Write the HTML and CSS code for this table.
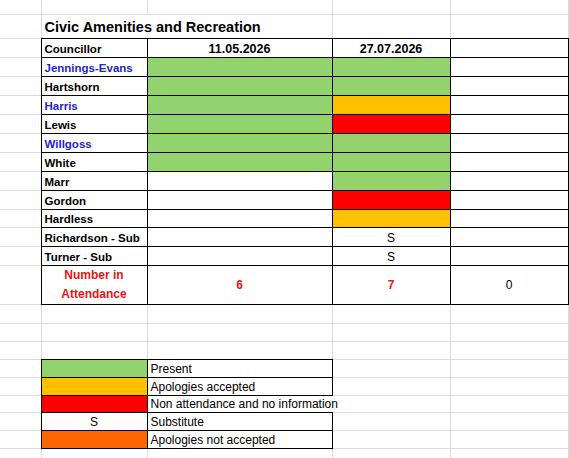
FILE: index.html
```html
<!DOCTYPE html>
<html lang="en">
<head>
  <meta charset="UTF-8" />
  <title>Civic Amenities and Recreation - Attendance</title>
  <link rel="stylesheet" href="styles.css">
</head>
<body>
  <table class="sheet">
    <colgroup>
      <col class="col-a">
      <col class="col-b">
      <col class="col-c">
      <col class="col-d">
      <col class="col-e">
    </colgroup>

    <tr class="row-top"><td></td><td></td><td></td><td></td><td></td></tr>
    <tr class="row-title">
      <td></td>
      <td colspan="2" class="title">Civic Amenities and Recreation</td>
      <td></td><td></td>
    </tr>

    <!-- attendance table -->
    <tr>
      <td></td>
      <td class="b name">Councillor</td>
      <td class="b date">11.05.2026</td>
      <td class="b date">27.07.2026</td>
      <td class="b"></td>
    </tr>
    <tr><td></td><td class="b name blue">Jennings-Evans</td><td class="b green"></td><td class="b green"></td><td class="b"></td></tr>
    <tr><td></td><td class="b name">Hartshorn</td><td class="b green"></td><td class="b green"></td><td class="b"></td></tr>
    <tr><td></td><td class="b name blue">Harris</td><td class="b green"></td><td class="b amber"></td><td class="b"></td></tr>
    <tr><td></td><td class="b name">Lewis</td><td class="b green"></td><td class="b red"></td><td class="b"></td></tr>
    <tr><td></td><td class="b name blue">Willgoss</td><td class="b green"></td><td class="b green"></td><td class="b"></td></tr>
    <tr><td></td><td class="b name">White</td><td class="b green"></td><td class="b green"></td><td class="b"></td></tr>
    <tr><td></td><td class="b name">Marr</td><td class="b"></td><td class="b green"></td><td class="b"></td></tr>
    <tr><td></td><td class="b name">Gordon</td><td class="b"></td><td class="b red"></td><td class="b"></td></tr>
    <tr class="row-short"><td></td><td class="b name">Hardless</td><td class="b"></td><td class="b amber"></td><td class="b"></td></tr>
    <tr><td></td><td class="b name">Richardson - Sub</td><td class="b"></td><td class="b mark">S</td><td class="b"></td></tr>
    <tr><td></td><td class="b name">Turner - Sub</td><td class="b"></td><td class="b mark">S</td><td class="b"></td></tr>
    <tr class="row-tall">
      <td></td>
      <td class="b total-label">Number in<br>Attendance</td>
      <td class="b total red-text">6</td>
      <td class="b total red-text">7</td>
      <td class="b total plain">0</td>
    </tr>

    <tr><td></td><td></td><td></td><td></td><td></td></tr>
    <tr class="row-short"><td></td><td></td><td></td><td></td><td></td></tr>
    <tr class="row-short"><td></td><td></td><td></td><td></td><td></td></tr>

    <!-- key -->
    <tr class="row-short"><td></td><td class="b green"></td><td class="b key">Present</td><td></td><td></td></tr>
    <tr class="row-short"><td></td><td class="b amber"></td><td class="b key">Apologies accepted</td><td></td><td></td></tr>
    <tr class="row-key"><td></td><td class="b red"></td><td class="b key open">Non attendance and no information</td><td></td><td></td></tr>
    <tr class="row-short"><td></td><td class="b mark">S</td><td class="b key">Substitute</td><td></td><td></td></tr>
    <tr class="row-short"><td></td><td class="b orange"></td><td class="b key">Apologies not accepted</td><td></td><td></td></tr>
    <tr class="row-short"><td></td><td></td><td></td><td></td><td></td></tr>
  </table>
</body>
</html>
```

FILE: styles.css
```css
body {
    margin: 0;
    font-family: "Liberation Sans", Arial, sans-serif;
    font-size: 12px;
    color: #000;
    background-color: white;
    overflow: hidden;
}

.sheet {
    border-collapse: collapse;
    table-layout: fixed;
    width: 568px;
}

/* light spreadsheet gridlines */
.sheet col {
    border-right: 1px solid #dcdcdc;
}

.sheet tr {
    height: 19px;
    border-bottom: 1px solid #dcdcdc;
}

.col-a { width: 41px; }
.col-b { width: 106px; }
.col-c { width: 185px; }
.col-d { width: 118px; }
.col-e { width: 118px; }

.row-top { height: 14px !important; }
.row-title { height: 24px !important; }
.row-short { height: 18px !important; }
.row-key { height: 17px !important; }
.row-tall { height: 38px !important; }

.sheet td {
    padding: 0 3px 1px;
    line-height: 14px;
    vertical-align: bottom;
    white-space: nowrap;
}

/* cells with black borders */
.sheet td.b {
    border: 1px solid #000;
}

.sheet td.open {
    border-right-style: hidden;
}

.sheet td.title {
    font-size: 14.5px;
    line-height: 17px;
    font-weight: bold;
    padding-bottom: 2px;
}

.name {
    font-size: 11.5px;
    font-weight: bold;
}

.blue {
    color: #2424cc;
}

.date {
    font-size: 12.5px;
    font-weight: bold;
    text-align: center;
}

.mark {
    text-align: center;
}

.sheet td.total-label {
    color: #e81414;
    font-weight: bold;
    text-align: center;
    line-height: 19px;
    vertical-align: top;
    padding: 0;
}

.sheet td.total {
    text-align: center;
    vertical-align: middle;
    padding: 0;
}

.red-text {
    color: #e81414;
    font-weight: bold;
}

.green { background-color: #92d36e; }
.amber { background-color: #ffc000; }
.red { background-color: #ff0000; }
.orange { background-color: #ff6600; }
```
